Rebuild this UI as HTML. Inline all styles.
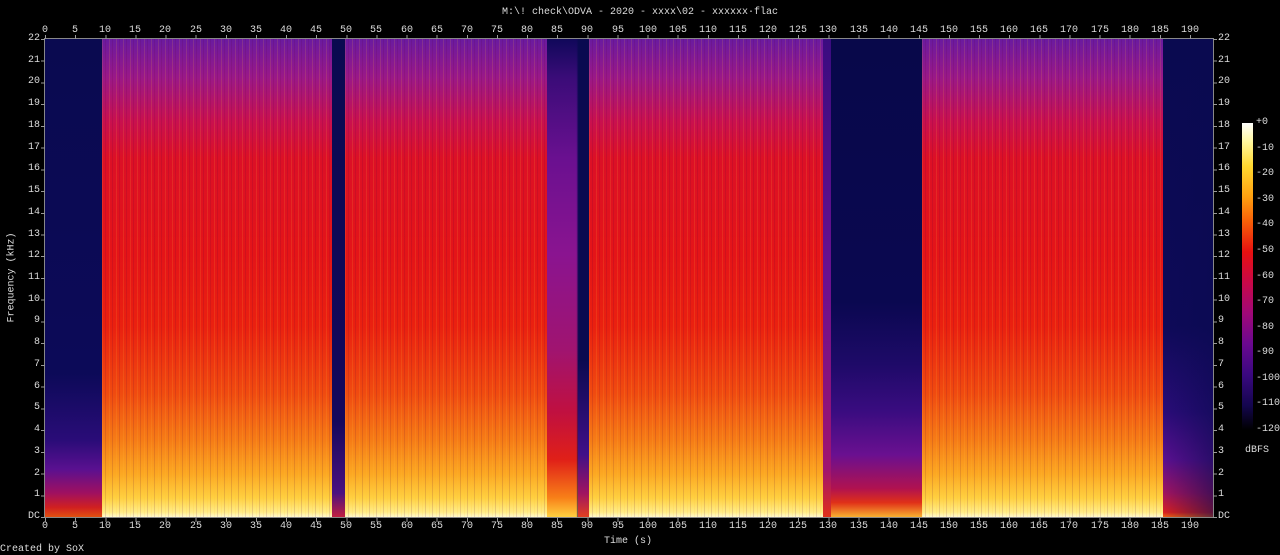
<!DOCTYPE html>
<html><head><meta charset="utf-8"><style>
*{margin:0;padding:0;box-sizing:border-box}
body{width:1280px;height:555px;background:#000;position:relative;overflow:hidden;font-family:"Liberation Mono",monospace;font-size:10px;color:#ddd}
.a{position:absolute}
.seg{position:absolute;top:39px;height:478px}
.music{background:linear-gradient(to bottom,#6a1aa0 0%,#9a1888 8%,#c81050 17%,#dc1026 25%,#e41418 45%,#ea2010 60%,#f04a10 74%,#f67c16 84%,#fca822 91%,#ffd040 96%,#ffec88 99%,#fffad0 100%)}
.music::after{content:"";position:absolute;inset:0;background:repeating-linear-gradient(to right,rgba(255,190,60,.14) 0 1px,rgba(0,0,0,0) 1px 3px,rgba(90,0,60,.14) 3px 4px,rgba(0,0,0,0) 4px 7px)}
.t{position:absolute;width:40px;margin-left:-20px;text-align:center;line-height:10px}
.fl{position:absolute;width:30px;text-align:right;line-height:10px;margin-top:-5px}
.fr{position:absolute;line-height:10px;margin-top:-5px}
</style></head><body>
<div class="a" style="left:0;top:7px;width:1280px;text-align:center;line-height:12px">M:\! check\ODVA - 2020 - xxxx\02 - xxxxxx·flac</div>

<div class="seg" style="left:45px;width:57px;background:linear-gradient(to bottom,#0a0a50 0%,#0c0a58 70%,#2a0c78 84%,#5a1090 90%,#a01060 95%,#d02020 98%,#e05010 100%)"></div>
<div class="seg music" style="left:102px;width:230px"></div>
<div class="seg" style="left:332px;width:13px;background:linear-gradient(to bottom,#0a0a50 0%,#14085c 80%,#4a1080 95%,#c02040 100%)"></div>
<div class="seg music" style="left:345px;width:202px"></div>
<div class="seg" style="left:547px;width:42px;background:linear-gradient(to right,rgba(0,0,0,0) 0 70%,#0a0a50 75%,#0a0a50 100%),linear-gradient(to bottom,#10085a 0%,#3a0c78 8%,#6a1090 25%,#8a1490 45%,#a01470 65%,#c01040 78%,#e02018 88%,#f88018 96%,#ffd040 100%)"></div>
<div class="seg" style="left:578px;width:11px;top:360px;height:157px;background:linear-gradient(to bottom,#0a0a50 0%,#401088 60%,#a01460 85%,#e04020 100%)"></div>
<div class="seg music" style="left:589px;width:234px"></div>
<div class="seg" style="left:823px;width:99px;background:linear-gradient(to bottom,#08084a 0%,#0a0850 55%,#1e0a68 68%,#3a0c80 78%,#6a1090 87%,#b01250 94%,#e03018 97%,#f8b030 100%)"></div>
<div class="seg" style="left:823px;width:8px;background:linear-gradient(to bottom,#3a0c80 0%,#6a1090 50%,#a01470 90%,#e03018 100%)"></div>
<div class="seg music" style="left:922px;width:241px"></div>
<div class="seg" style="left:1163px;width:50px;background:linear-gradient(to right,rgba(0,0,0,0) 0%,rgba(10,10,80,.6) 100%),linear-gradient(to bottom,#0a0a50 0%,#0e0a58 60%,#2a0c78 78%,#5a1090 88%,#a01460 95%,#d82020 99%,#f06010 100%)"></div>
<div class="a" style="left:44px;top:38px;width:1170px;height:480px;border:1px solid #888"></div>

<div class="a" style="left:1242px;top:123px;width:11px;height:307px;background:linear-gradient(to bottom,#ffffff 0%,#fff8a0 6%,#ffd830 14%,#ffa010 24%,#f86008 32%,#e81010 42%,#c80848 52%,#a00878 62%,#6a0890 72%,#3a0880 82%,#14064e 92%,#000000 100%)"></div>
<div class="fr" style="left:1256px;top:123px">+0</div>
<div class="fr" style="left:1256px;top:149px">-10</div>
<div class="fr" style="left:1256px;top:174px">-20</div>
<div class="fr" style="left:1256px;top:200px">-30</div>
<div class="fr" style="left:1256px;top:225px">-40</div>
<div class="fr" style="left:1256px;top:251px">-50</div>
<div class="fr" style="left:1256px;top:277px">-60</div>
<div class="fr" style="left:1256px;top:302px">-70</div>
<div class="fr" style="left:1256px;top:328px">-80</div>
<div class="fr" style="left:1256px;top:353px">-90</div>
<div class="fr" style="left:1256px;top:379px">-100</div>
<div class="fr" style="left:1256px;top:404px">-110</div>
<div class="fr" style="left:1256px;top:430px">-120</div>
<div class="a" style="left:1245px;top:445px">dBFS</div>

<div class="a" style="left:0;top:536px;width:1256px;text-align:center">Time (s)</div>
<div class="a" style="left:-38px;top:272px;width:100px;text-align:center;transform:rotate(-90deg)">Frequency (kHz)</div>
<div class="a" style="left:0;top:544px">Created by SoX</div>

<div class="a" style="left:0;top:26px;width:1280px;height:10px">
<div class="t" style="left:45px">0</div><div class="t" style="left:75px">5</div><div class="t" style="left:105px">10</div><div class="t" style="left:135px">15</div><div class="t" style="left:165px">20</div><div class="t" style="left:196px">25</div><div class="t" style="left:226px">30</div><div class="t" style="left:256px">35</div><div class="t" style="left:286px">40</div><div class="t" style="left:316px">45</div><div class="t" style="left:346px">50</div><div class="t" style="left:376px">55</div><div class="t" style="left:407px">60</div><div class="t" style="left:437px">65</div><div class="t" style="left:467px">70</div><div class="t" style="left:497px">75</div><div class="t" style="left:527px">80</div><div class="t" style="left:557px">85</div><div class="t" style="left:587px">90</div><div class="t" style="left:618px">95</div><div class="t" style="left:648px">100</div><div class="t" style="left:678px">105</div><div class="t" style="left:708px">110</div><div class="t" style="left:738px">115</div><div class="t" style="left:768px">120</div><div class="t" style="left:798px">125</div><div class="t" style="left:828px">130</div><div class="t" style="left:859px">135</div><div class="t" style="left:889px">140</div><div class="t" style="left:919px">145</div><div class="t" style="left:949px">150</div><div class="t" style="left:979px">155</div><div class="t" style="left:1009px">160</div><div class="t" style="left:1039px">165</div><div class="t" style="left:1069px">170</div><div class="t" style="left:1100px">175</div><div class="t" style="left:1130px">180</div><div class="t" style="left:1160px">185</div><div class="t" style="left:1190px">190</div>
</div>
<div class="a" style="left:0;top:522px;width:1280px;height:10px">
<div class="t" style="left:45px">0</div><div class="t" style="left:75px">5</div><div class="t" style="left:105px">10</div><div class="t" style="left:135px">15</div><div class="t" style="left:165px">20</div><div class="t" style="left:196px">25</div><div class="t" style="left:226px">30</div><div class="t" style="left:256px">35</div><div class="t" style="left:286px">40</div><div class="t" style="left:316px">45</div><div class="t" style="left:346px">50</div><div class="t" style="left:376px">55</div><div class="t" style="left:407px">60</div><div class="t" style="left:437px">65</div><div class="t" style="left:467px">70</div><div class="t" style="left:497px">75</div><div class="t" style="left:527px">80</div><div class="t" style="left:557px">85</div><div class="t" style="left:587px">90</div><div class="t" style="left:618px">95</div><div class="t" style="left:648px">100</div><div class="t" style="left:678px">105</div><div class="t" style="left:708px">110</div><div class="t" style="left:738px">115</div><div class="t" style="left:768px">120</div><div class="t" style="left:798px">125</div><div class="t" style="left:828px">130</div><div class="t" style="left:859px">135</div><div class="t" style="left:889px">140</div><div class="t" style="left:919px">145</div><div class="t" style="left:949px">150</div><div class="t" style="left:979px">155</div><div class="t" style="left:1009px">160</div><div class="t" style="left:1039px">165</div><div class="t" style="left:1069px">170</div><div class="t" style="left:1100px">175</div><div class="t" style="left:1130px">180</div><div class="t" style="left:1160px">185</div><div class="t" style="left:1190px">190</div>
</div>

<div class="fl" style="left:10px;top:517px">DC</div><div class="fl" style="left:10px;top:495px">1</div><div class="fl" style="left:10px;top:474px">2</div><div class="fl" style="left:10px;top:452px">3</div><div class="fl" style="left:10px;top:430px">4</div><div class="fl" style="left:10px;top:408px">5</div><div class="fl" style="left:10px;top:387px">6</div><div class="fl" style="left:10px;top:365px">7</div><div class="fl" style="left:10px;top:343px">8</div><div class="fl" style="left:10px;top:321px">9</div><div class="fl" style="left:10px;top:300px">10</div><div class="fl" style="left:10px;top:278px">11</div><div class="fl" style="left:10px;top:256px">12</div><div class="fl" style="left:10px;top:235px">13</div><div class="fl" style="left:10px;top:213px">14</div><div class="fl" style="left:10px;top:191px">15</div><div class="fl" style="left:10px;top:169px">16</div><div class="fl" style="left:10px;top:148px">17</div><div class="fl" style="left:10px;top:126px">18</div><div class="fl" style="left:10px;top:104px">19</div><div class="fl" style="left:10px;top:82px">20</div><div class="fl" style="left:10px;top:61px">21</div><div class="fl" style="left:10px;top:39px">22</div>
<div class="fr" style="left:1218px;top:517px">DC</div><div class="fr" style="left:1218px;top:495px">1</div><div class="fr" style="left:1218px;top:474px">2</div><div class="fr" style="left:1218px;top:452px">3</div><div class="fr" style="left:1218px;top:430px">4</div><div class="fr" style="left:1218px;top:408px">5</div><div class="fr" style="left:1218px;top:387px">6</div><div class="fr" style="left:1218px;top:365px">7</div><div class="fr" style="left:1218px;top:343px">8</div><div class="fr" style="left:1218px;top:321px">9</div><div class="fr" style="left:1218px;top:300px">10</div><div class="fr" style="left:1218px;top:278px">11</div><div class="fr" style="left:1218px;top:256px">12</div><div class="fr" style="left:1218px;top:235px">13</div><div class="fr" style="left:1218px;top:213px">14</div><div class="fr" style="left:1218px;top:191px">15</div><div class="fr" style="left:1218px;top:169px">16</div><div class="fr" style="left:1218px;top:148px">17</div><div class="fr" style="left:1218px;top:126px">18</div><div class="fr" style="left:1218px;top:104px">19</div><div class="fr" style="left:1218px;top:82px">20</div><div class="fr" style="left:1218px;top:61px">21</div><div class="fr" style="left:1218px;top:39px">22</div>

<div class="a" style="left:41px;top:39px;width:4px;height:479px;background:repeating-linear-gradient(to top,#999 0 1px,transparent 1px 21.73px)"></div>
<div class="a" style="left:1213px;top:39px;width:4px;height:479px;background:repeating-linear-gradient(to top,#999 0 1px,transparent 1px 21.73px)"></div>
<div class="a" style="left:45px;top:35px;width:1168px;height:4px;background:repeating-linear-gradient(to right,#999 0 1px,transparent 1px 30.13px)"></div>
<div class="a" style="left:45px;top:518px;width:1168px;height:4px;background:repeating-linear-gradient(to right,#999 0 1px,transparent 1px 30.13px)"></div>
</body></html>
